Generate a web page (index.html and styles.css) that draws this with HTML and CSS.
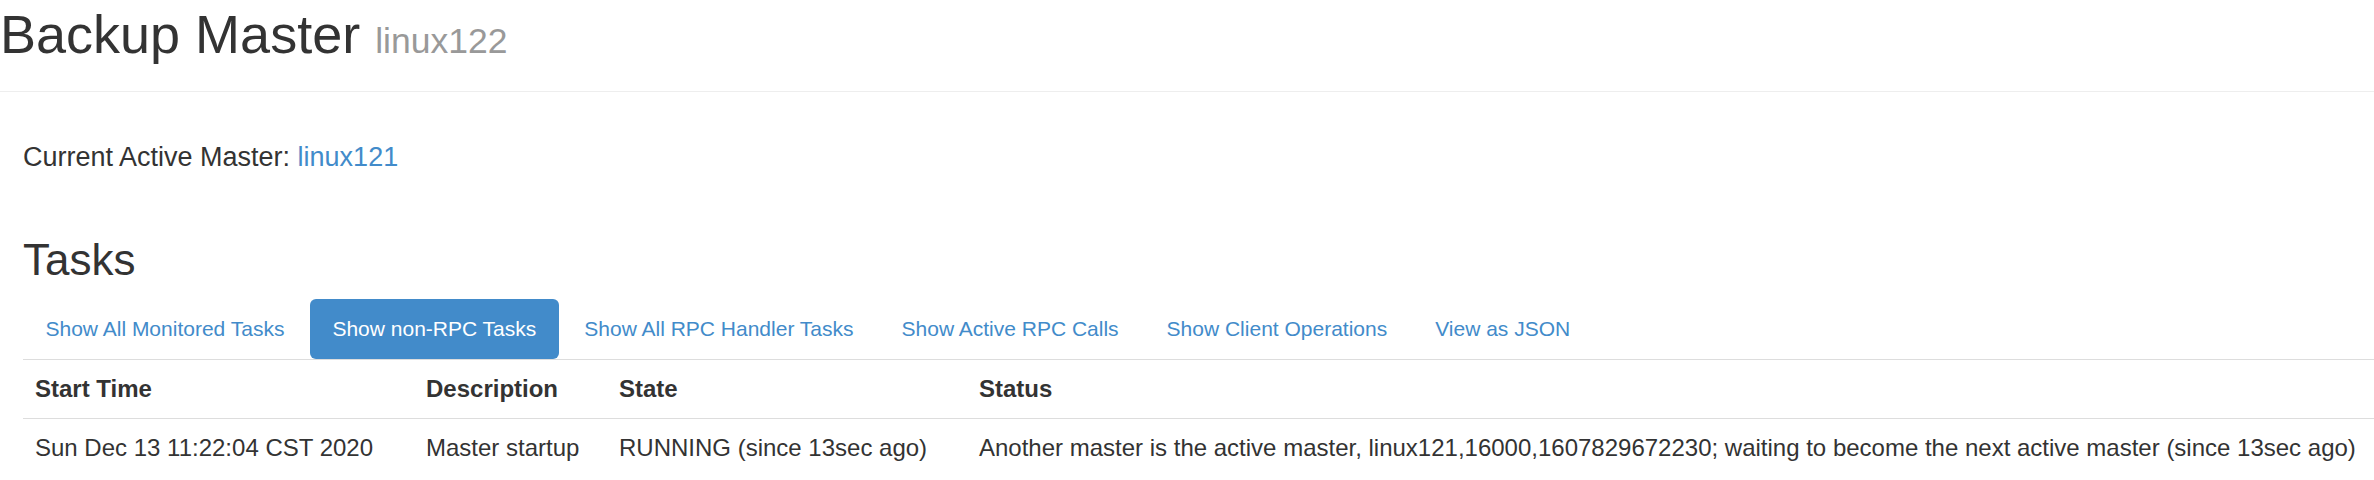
FILE: index.html
```html
<!DOCTYPE html>
<html lang="en">
<head>
<meta charset="utf-8">
<title>Backup Master linux122</title>
<link rel="stylesheet" href="styles.css">
</head>
<body>
<div class="page-header">
  <h1>Backup Master <small>linux122</small></h1>
</div>
<div class="container">
  <p class="active-master">Current Active Master: <a href="#">linux121</a></p>
  <h2 class="section-title">Tasks</h2>
  <ul class="nav-pills">
    <li><a href="#">Show All Monitored Tasks</a></li>
    <li class="active"><a href="#">Show non-RPC Tasks</a></li>
    <li><a href="#">Show All RPC Handler Tasks</a></li>
    <li><a href="#">Show Active RPC Calls</a></li>
    <li><a href="#">Show Client Operations</a></li>
    <li><a href="#">View as JSON</a></li>
  </ul>
  <table class="tasks">
    <thead>
      <tr>
        <th class="col-time">Start Time</th>
        <th class="col-desc">Description</th>
        <th class="col-state">State</th>
        <th class="col-status">Status</th>
      </tr>
    </thead>
    <tbody>
      <tr>
        <td>Sun Dec 13 11:22:04 CST 2020</td>
        <td>Master startup</td>
        <td>RUNNING (since 13sec ago)</td>
        <td>Another master is the active master, linux121,16000,1607829672230; waiting to become the next active master (since 13sec ago)</td>
      </tr>
    </tbody>
  </table>
</div>
</body>
</html>
```
FILE: styles.css
```css
html, body {
  margin: 0;
  padding: 0;
  overflow: hidden;
  background: #fff;
}
body {
  font-family: "Liberation Sans", Arial, Helvetica, sans-serif;
  color: #333;
  font-size: 21px;
}
a {
  color: #428bca;
  text-decoration: none;
}
.page-header {
  padding-bottom: 27px;
  border-bottom: 1px solid #eee;
}
.page-header h1 {
  margin: 4px 0 0 0;
  font-size: 54px;
  font-weight: 500;
  line-height: 60px;
  color: #333;
}
.page-header h1 small {
  font-size: 35.5px;
  font-weight: normal;
  line-height: 1;
  color: #999;
}
.container {
  padding-left: 23px;
}
.active-master {
  margin: 46px 0 0 0;
  font-size: 27px;
  line-height: 38px;
}
.section-title {
  margin: 59.5px 0 15px 0;
  font-size: 44px;
  font-weight: 500;
  line-height: 48.5px;
}
.nav-pills {
  list-style: none;
  margin: 0;
  padding: 0;
  display: flex;
  gap: 3px;
}
.nav-pills li a {
  display: block;
  padding: 15px 22.5px;
  font-size: 21px;
  line-height: 30px;
  border-radius: 6px;
  color: #428bca;
  white-space: nowrap;
}
.nav-pills li.active a {
  background: #428bca;
  color: #fff;
}
.tasks {
  width: 100%;
  border-collapse: collapse;
  border-spacing: 0;
  table-layout: fixed;
  font-size: 24px;
  line-height: 34.29px;
  border-top: 1px solid #ddd;
}
.tasks th,
.tasks td {
  padding: 12px;
  text-align: left;
  white-space: nowrap;
  vertical-align: top;
}
.tasks th {
  font-weight: bold;
  border-bottom: 1px solid #ddd;
}
.col-time { width: 367px; }
.col-desc { width: 169px; }
.col-state { width: 336px; }
.col-status { width: auto; }
```
